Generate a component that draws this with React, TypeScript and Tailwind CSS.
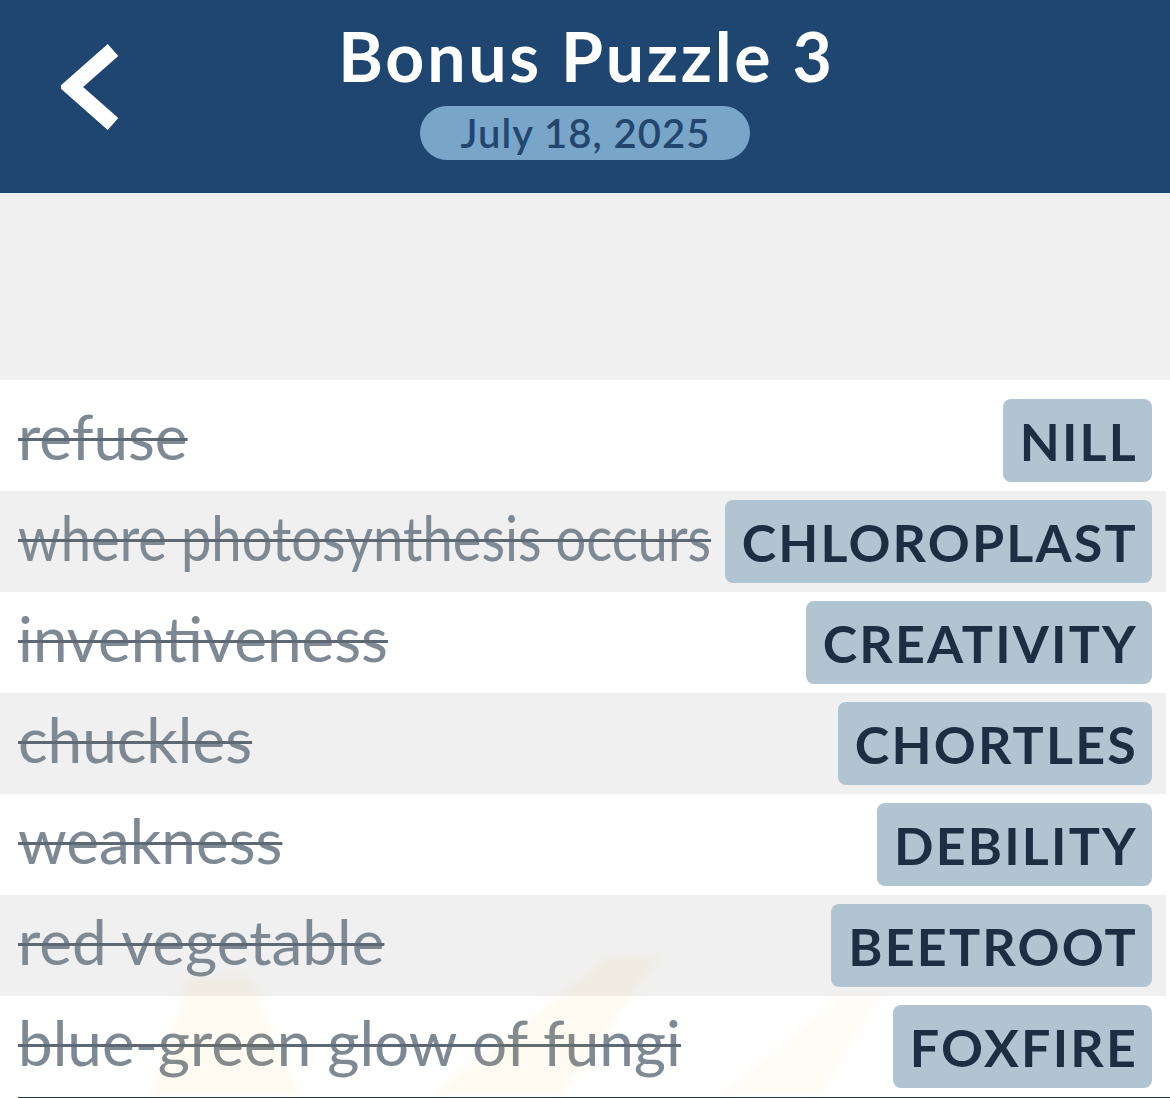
type Clue = {
  clue: string;
  answer: string;
  squeeze?: boolean;
};

const clues: Clue[] = [
  { clue: "refuse", answer: "NILL" },
  { clue: "where photosynthesis occurs", answer: "CHLOROPLAST", squeeze: true },
  { clue: "inventiveness", answer: "CREATIVITY" },
  { clue: "chuckles", answer: "CHORTLES" },
  { clue: "weakness", answer: "DEBILITY" },
  { clue: "red vegetable", answer: "BEETROOT" },
  { clue: "blue-green glow of fungi", answer: "FOXFIRE" },
];

function BackIcon() {
  return (
    <svg width="64" height="96" viewBox="0 0 64 96" fill="none">
      <polyline
        points="52,8 10,45 52,82"
        stroke="white"
        strokeWidth="16"
        strokeLinejoin="miter"
      />
    </svg>
  );
}

function Watermark() {
  return (
    <svg
      className="pointer-events-none absolute bottom-[2px] left-0 blur-[4px]"
      width="1170"
      height="160"
      viewBox="0 0 1170 160"
    >
      <polygon points="150,160 300,160 250,40 190,40" fill="#fbbf24" opacity="0.06" />
      <polygon points="430,160 560,160 660,20 610,20" fill="#fbbf24" opacity="0.06" />
      <polygon points="720,160 820,160 880,60 840,60" fill="#fbbf24" opacity="0.04" />
    </svg>
  );
}

function ClueRow({ item, index }: { item: Clue; index: number }) {
  return (
    <div
      className={`flex h-[101px] items-center justify-between pl-[18px] pr-[14px] ${
        index % 2 === 0 ? "bg-white" : "bg-[#f0f0f0]"
      }`}
    >
      <div className={item.squeeze ? "mb-[9px] w-[692px]" : "mb-[9px]"}>
        <span
          className={`inline-block origin-left whitespace-nowrap text-[62px] leading-none text-[#7e8993] line-through decoration-[#5c6873] decoration-[3px] ${
            item.squeeze ? "scale-x-[0.876]" : ""
          }`}
        >
          {item.clue}
        </span>
      </div>
      <span className="flex h-[83px] shrink-0 items-center rounded-[8px] bg-[#b1c4d2] pl-[17px] pr-[14px] text-[52px] font-bold leading-none tracking-[2.2px] text-[#1c2f42]">
        {item.answer}
      </span>
    </div>
  );
}

export default function App() {
  return (
    <div
      className="relative h-[1098px] w-[1170px] overflow-hidden bg-white"
      style={{ fontFamily: "Lato, 'Noto Sans', sans-serif" }}
    >
      <header className="relative flex h-[193px] flex-col items-center bg-[#1f4670] pt-[18px]">
        <div className="absolute left-[61px] top-[42px]">
          <BackIcon />
        </div>
        <h1 className="pl-[3px] text-[68px] font-bold leading-[76px] tracking-[2.7px] text-white">
          Bonus Puzzle 3
        </h1>
        <div className="mt-[12px] flex h-[54px] w-[330px] items-center justify-center rounded-full bg-[#79a5c9] pl-[1px] text-[40px] font-semibold tracking-[1px] text-[#22466d]">
          July 18, 2025
        </div>
      </header>

      <div className="h-[187px] bg-[#f0f0f0]" />

      <div className="mr-[4px] bg-white pt-[10px]">
        {clues.map((item, i) => (
          <ClueRow key={item.answer} item={item} index={i} />
        ))}
      </div>

      <div className="ml-[18px] h-[2px] bg-[#22384d]" />

      <Watermark />
    </div>
  );
}
